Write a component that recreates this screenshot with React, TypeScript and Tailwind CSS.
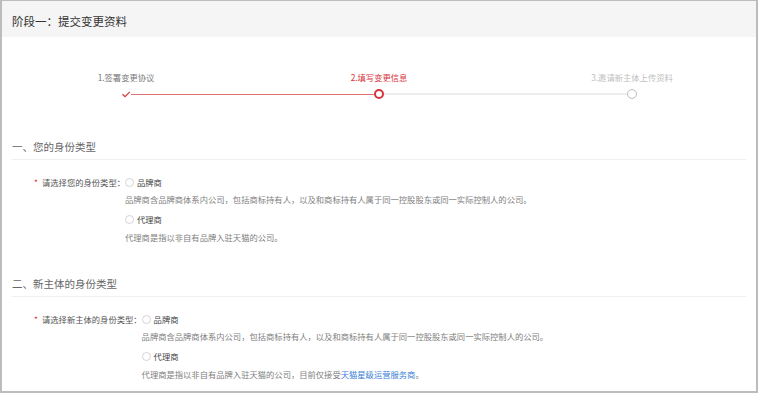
const FONT = '"Noto Sans CJK SC", "Noto Sans", sans-serif';

type Option = { name: string; desc: React.ReactNode };

const BRAND_DESC =
  "品牌商含品牌商体系内公司，包括商标持有人，以及和商标持有人属于同一控股股东或同一实际控制人的公司。";

function Radio({ label }: { label: string }) {
  return (
    <div className="flex items-center h-[12px] leading-[12px]">
      <span className="w-[9px] h-[9px] rounded-full border border-[#d4d4d4] bg-white shrink-0" />
      <span className="ml-[3px] text-[#444]">{label}</span>
    </div>
  );
}

function Section({ title, label, options }: { title: string; label: string; options: Option[] }) {
  return (
    <div>
      <div className="mx-[10px] border-b border-[#efefef] pb-[5px] text-[10.5px] leading-[14px] text-[#666]">
        {title}
      </div>
      <div className="flex pl-[32px] mt-[16px] text-[8.3px]">
        <span className="w-[8px] text-[#e4393c] leading-[12px]">*</span>
        <span className="text-[#555] leading-[12px] whitespace-nowrap">{label}</span>
        <div className="flex flex-col">
          <Radio label={options[0].name} />
          <p className="mt-[5px] leading-[12px] text-[#808080] whitespace-nowrap">{options[0].desc}</p>
          <div className="mt-[8px]">
            <Radio label={options[1].name} />
          </div>
          <p className="mt-[6px] leading-[12px] text-[#808080] whitespace-nowrap">{options[1].desc}</p>
        </div>
      </div>
    </div>
  );
}

function Stepper() {
  const steps = [
    { label: "1.签署变更协议", color: "text-[#777]" },
    { label: "2.填写变更信息", color: "text-[#d6343b]" },
    { label: "3.邀请新主体上传资料", color: "text-[#c0c0c0]" },
  ];
  return (
    <div className="pt-[34px]">
      <div className="flex justify-between px-[119px] text-[8.3px] leading-[12px]">
        {steps.map((s) => (
          <div key={s.label} className="w-[10px] flex justify-center">
            <span className={`whitespace-nowrap ${s.color}`}>{s.label}</span>
          </div>
        ))}
      </div>
      <div className="mt-[6px] flex items-center px-[119px] h-[10px]">
        <svg width="10" height="10" viewBox="0 0 10 10" className="shrink-0">
          <path d="M1.5 5.2 L4 7.6 L8.8 2.8" fill="none" stroke="#d6343b" strokeWidth="1.2" />
        </svg>
        <div className="flex-1 h-px bg-[#de7373]" />
        <span className="w-[10px] h-[10px] rounded-full border-2 border-[#d6343b] bg-white shrink-0" />
        <div className="flex-1 h-[2px] bg-[#ececec]" />
        <span className="w-[10px] h-[10px] rounded-full border-[1.5px] border-[#bdbdbd] bg-white shrink-0" />
      </div>
    </div>
  );
}

export default function App() {
  return (
    <div
      className="w-[758px] h-[393px] overflow-hidden bg-white border-t border-l-2 border-r-2 border-b-2 border-[#bcbcbc]"
      style={{ fontFamily: FONT }}
    >
      <div className="h-[36px] pt-[5px] px-[10px] flex items-center bg-[#f5f5f5] text-[11.5px] text-[#333]">
        阶段一：提交变更资料
      </div>
      <Stepper />
      <div className="mt-[41px]">
        <Section
          title="一、您的身份类型"
          label="请选择您的身份类型："
          options={[
            { name: "品牌商", desc: BRAND_DESC },
            { name: "代理商", desc: "代理商是指以非自有品牌入驻天猫的公司。" },
          ]}
        />
      </div>
      <div className="mt-[34px]">
        <Section
          title="二、新主体的身份类型"
          label="请选择新主体的身份类型："
          options={[
            { name: "品牌商", desc: BRAND_DESC },
            {
              name: "代理商",
              desc: (
                <>
                  代理商是指以非自有品牌入驻天猫的公司，目前仅接受
                  <a className="text-[#3b7fd9]">天猫星级运营服务商</a>。
                </>
              ),
            },
          ]}
        />
      </div>
    </div>
  );
}
